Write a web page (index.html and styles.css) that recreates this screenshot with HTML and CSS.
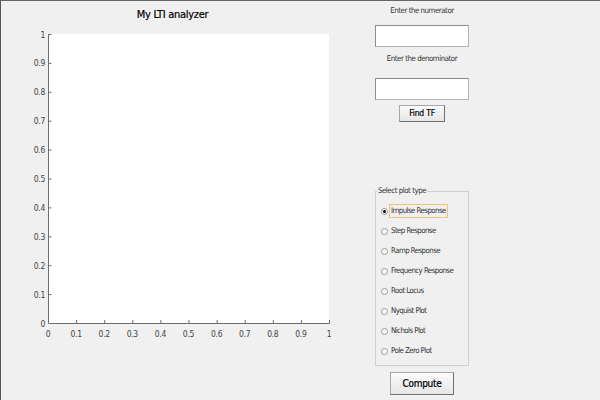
FILE: index.html
```html
<!DOCTYPE html>
<html>
<head>
<meta charset="utf-8">
<link rel="stylesheet" href="styles.css">
</head>
<body>
<div class="window">
  <div class="left">
    <div class="title">My LTI analyzer</div>
    <svg class="plot" width="349" height="372" viewBox="0 0 349 372">
      <g transform="translate(-1,-28)">
        <rect x="48" y="34" width="281" height="289" fill="#ffffff"/>
        <g stroke="#6e6e6e" stroke-width="1" fill="none">
          <path d="M48.5 34 V323.5 H329.5 V320"/>
          <path d="M48 34.5 H51.5"/>
          <path d="M48 63.4 H51.5 M48 92.3 H51.5 M48 121.2 H51.5 M48 150.1 H51.5 M48 179 H51.5 M48 207.9 H51.5 M48 236.8 H51.5 M48 265.7 H51.5 M48 294.6 H51.5"/>
          <path d="M76.6 323 V320 M104.7 323 V320 M132.8 323 V320 M160.9 323 V320 M189 323 V320 M217.1 323 V320 M245.2 323 V320 M273.3 323 V320 M301.4 323 V320"/>
        </g>
        <g class="ylab" text-anchor="end">
          <text x="45" y="37.5">1</text>
          <text x="45" y="66.4">0.9</text>
          <text x="45" y="95.3">0.8</text>
          <text x="45" y="124.2">0.7</text>
          <text x="45" y="153.1">0.6</text>
          <text x="45" y="182">0.5</text>
          <text x="45" y="210.9">0.4</text>
          <text x="45" y="239.8">0.3</text>
          <text x="45" y="268.7">0.2</text>
          <text x="45" y="297.6">0.1</text>
          <text x="45" y="326.5">0</text>
        </g>
        <g class="xlab" text-anchor="middle">
          <text x="48" y="337">0</text>
          <text x="76.1" y="337">0.1</text>
          <text x="104.2" y="337">0.2</text>
          <text x="132.3" y="337">0.3</text>
          <text x="160.4" y="337">0.4</text>
          <text x="188.5" y="337">0.5</text>
          <text x="216.6" y="337">0.6</text>
          <text x="244.7" y="337">0.7</text>
          <text x="272.8" y="337">0.8</text>
          <text x="300.9" y="337">0.9</text>
          <text x="329" y="337">1</text>
        </g>
      </g>
    </svg>
  </div>
  <div class="right">
    <div class="label lab1">Enter the numerator</div>
    <div class="textbox tb1"></div>
    <div class="label lab2">Enter the denominator</div>
    <div class="textbox tb2"></div>
    <div class="button findtf">Find TF</div>
    <fieldset class="group">
      <legend>Select plot type</legend>
      <div class="radio-row"><span class="radio checked"></span><span class="rtext focus">Impulse Response</span></div>
      <div class="radio-row"><span class="radio"></span><span class="rtext">Step Response</span></div>
      <div class="radio-row"><span class="radio"></span><span class="rtext">Ramp Response</span></div>
      <div class="radio-row"><span class="radio"></span><span class="rtext">Frequency Response</span></div>
      <div class="radio-row"><span class="radio"></span><span class="rtext">Root Locus</span></div>
      <div class="radio-row"><span class="radio"></span><span class="rtext">Nyquist Plot</span></div>
      <div class="radio-row"><span class="radio"></span><span class="rtext">Nichols Plot</span></div>
      <div class="radio-row"><span class="radio"></span><span class="rtext">Pole Zero Plot</span></div>
    </fieldset>
    <div class="button compute">Compute</div>
  </div>
</div>
</body>
</html>
```

FILE: styles.css
```css
html, body {
  margin: 0;
  padding: 0;
}
body {
  font-family: "DejaVu Sans Condensed", "DejaVu Sans", sans-serif;
  font-stretch: condensed;
  background: #f0f0f0;
}
.window {
  width: 600px;
  height: 400px;
  box-sizing: border-box;
  border-top: 1px solid #666666;
  border-left: 1px solid #555555;
  background: #f0f0f0;
  display: flex;
  overflow: hidden;
}
.left {
  width: 349px;
  display: flex;
  flex-direction: column;
}
.title {
  height: 27px;
  line-height: 27px;
  font-size: 11px;
  letter-spacing: -0.3px;
  color: #000;
  text-align: center;
  padding-right: 6px;
  box-sizing: border-box;
  -webkit-text-stroke: 0.2px #000;
}
.plot {
  display: block;
}
.ylab text, .xlab text {
  font-family: "DejaVu Sans Condensed", "DejaVu Sans", sans-serif;
  font-size: 8.5px;
  letter-spacing: -0.3px;
  fill: #444444;
}
.right {
  width: 144px;
  display: flex;
  flex-direction: column;
  align-items: center;
}
.label {
  height: 12px;
  line-height: 12px;
  font-size: 7.8px;
  letter-spacing: -0.45px;
  color: #333;
  white-space: nowrap;
}
.lab1 { margin-top: 4px; }
.lab2 { margin-top: 6px; }
.textbox {
  width: 94px;
  height: 22px;
  box-sizing: border-box;
  background: #fff;
  border: 1px solid #b4b4b4;
  border-top-color: #8c8c8c;
  border-left-color: #8c8c8c;
}
.tb1 { margin-top: 8px; }
.tb2 { margin-top: 13px; }
.button {
  box-sizing: border-box;
  border: 1px solid #a8a8a8;
  border-right-color: #707070;
  border-bottom-color: #707070;
  background: linear-gradient(#fbfbfb, #e6e6e6);
  text-align: center;
  color: #000;
  white-space: nowrap;
  -webkit-text-stroke: 0.2px #000;
}
.findtf {
  margin-top: 5px;
  width: 46px;
  height: 17px;
  line-height: 15px;
  font-size: 8.5px;
  letter-spacing: -0.2px;
}
.group {
  margin: 64px 0 0 0;
  width: 94px;
  box-sizing: border-box;
  border: 1px solid #cfcfcf;
  padding: 5px 0 4px 5px;
  min-width: 0;
}
.group legend {
  font-size: 7.8px;
  letter-spacing: -0.45px;
  line-height: 10px;
  padding: 0 1px;
  margin-left: -4px;
  color: #333;
}
.radio-row {
  height: 20px;
  display: flex;
  align-items: center;
  white-space: nowrap;
}
.radio {
  width: 7px;
  height: 7px;
  box-sizing: border-box;
  border: 1px solid #9a9a9a;
  border-radius: 50%;
  background: #fbfbfb;
  display: flex;
  align-items: center;
  justify-content: center;
  flex: none;
}
.radio.checked::after {
  content: "";
  width: 3px;
  height: 3px;
  border-radius: 50%;
  background: #000;
}
.rtext {
  margin-left: 1px;
  font-size: 7.8px;
  letter-spacing: -0.55px;
  line-height: 12px;
  padding: 0 1px;
  border: 1px solid transparent;
  color: #333;
}
.rtext.focus {
  border-color: #f2c27e;
}
.compute {
  margin-top: 6px;
  width: 64px;
  height: 23px;
  line-height: 21px;
  font-size: 10px;
  letter-spacing: -0.3px;
}
```
